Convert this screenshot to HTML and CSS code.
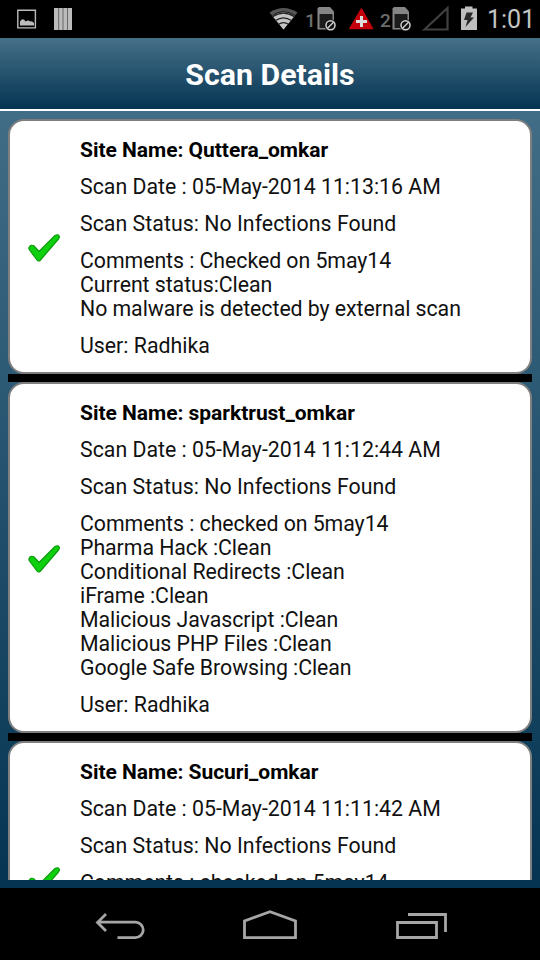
FILE: index.html
```html
<!DOCTYPE html>
<html lang="en">
<head>
	<meta charset="UTF-8">
	<title>Scan Details</title>
	<link rel="stylesheet" href="styles.css">
</head>
<body>
	<div class="status">
		<svg class="notices" width="90" height="38" viewBox="0 0 90 38">
			<path d="M17.800 10.300h17.600v17.600h-17.600z" fill="none" stroke="#bcbcbc" stroke-width="1.400"/>
			<path d="M20 25.500v-4q3-4.500 5.500 0 3-2 4.500 0 2-1 4 1.500v2.500z" fill="#bcbcbc"/>
			<path d="M54 8h18v22h-18z" fill="#bcbcbc"/>
			<path d="M58.700 8v22M63 8v22M67.500 8v22" stroke="#666" stroke-width="1"/>
		</svg>
		<svg class="wifi" width="30" height="38" viewBox="270 0 30 38">
			<path d="M270.500 12.500Q284.500 3.500 298.500 12.500L284.500 29.500z" fill="#555"/>
			<path d="M273.500 16Q284.500 8.500 295.500 16L284.500 29.500z" fill="#c4c4c4"/>
			<path d="M273.500 16.800Q284.500 9.500 295.500 16.800M276.500 20.600Q284.500 15.300 292.500 20.600M279.500 24.300Q284.500 21 289.500 24.300" fill="none" stroke="#222" stroke-width="1.2"/>
			<path d="M273.500 15.300Q284.500 8 295.500 15.300" fill="none" stroke="#000" stroke-width=".7"/>
		</svg>
		<span class="slot">1</span>
		<svg class="sim" width="20" height="38" viewBox="0 0 20 38">
			<path d="M.5 8.500L2 7h11l4 4.500V29.500H.5z" fill="#868686"/>
			<path d="M2.500 14h13v14h-13z" fill="#1c1c1c"/>
			<circle cx="13.500" cy="25.300" r="6" fill="#111"/>
			<circle cx="13.500" cy="25.300" r="4.500" fill="none" stroke="#d0d0d0" stroke-width="1.500"/>
			<path d="M10.500 28.300l6-6" stroke="#d0d0d0" stroke-width="1.500"/>
		</svg>
		<svg class="alert" width="26" height="38" viewBox="348 0 26 38">
			<path d="M361.500 9L372.500 28.500H350z" fill="#c4000c" stroke="#c4000c" stroke-width="1.500" stroke-linejoin="round"/>
			<path d="M356 21.500h11M361.500 16v11" stroke="#ddd" stroke-width="3"/>
		</svg>
		<span class="slot">2</span>
		<svg class="sim" width="20" height="38" viewBox="0 0 20 38">
			<path d="M.5 8.500L2 7h11l4 4.500V29.500H.5z" fill="#868686"/>
			<path d="M2.500 14h13v14h-13z" fill="#1c1c1c"/>
			<circle cx="13.500" cy="25.300" r="6" fill="#111"/>
			<circle cx="13.500" cy="25.300" r="4.500" fill="none" stroke="#d0d0d0" stroke-width="1.500"/>
			<path d="M10.500 28.300l6-6" stroke="#d0d0d0" stroke-width="1.500"/>
		</svg>
		<svg class="signal" width="30" height="38" viewBox="420 0 30 38">
			<path d="M424.500 29.500L447.500 8v21.500z" fill="none" stroke="#404040" stroke-width="2.200"/>
		</svg>
		<svg class="battery" width="18" height="38" viewBox="460 0 18 38">
			<path d="M461 8.500h4v-2h7.500v2h4.500V30h-16z" fill="#c0c0c0"/>
			<path d="M466.500 12.500h6.500l-2.500 5h3.500l-8.500 9.500 2-7h-3.500z" fill="#2a2a2a"/>
		</svg>
		<span class="clock">1:01</span>
	</div>
	<div class="title">Scan Details</div>
	<div class="main">
		<div class="list">
			<div class="card">
				<svg class="tick" width="34" height="32" viewBox="0 0 34 32">
					<path d="M2 15.500q2-3.500 5-1.500l5 5.500L28 3.500q3.500-2 4.500 1.500l-1 2L13.500 28q-2 2-3.500 0L2.500 18q-1-1.500-.5-2.500z" fill="#0fd00f" stroke="#0b9c0b" stroke-width="1.200" stroke-linejoin="round"/>
				</svg>
				<div class="info">
					<h2>Site Name: Quttera_omkar</h2>
					<p>Scan Date : 05-May-2014 11:13:16 AM</p>
					<p class="result">Scan Status: No Infections Found</p>
					<p class="comments">Comments : Checked on 5may14<br>Current status:Clean<br>No malware is detected by external scan</p>
					<p>User: Radhika</p>
				</div>
			</div>
			<div class="card">
				<svg class="tick" width="34" height="32" viewBox="0 0 34 32">
					<path d="M2 15.500q2-3.500 5-1.500l5 5.500L28 3.500q3.500-2 4.500 1.500l-1 2L13.500 28q-2 2-3.500 0L2.500 18q-1-1.500-.5-2.500z" fill="#0fd00f" stroke="#0b9c0b" stroke-width="1.200" stroke-linejoin="round"/>
				</svg>
				<div class="info">
					<h2>Site Name: sparktrust_omkar</h2>
					<p>Scan Date : 05-May-2014 11:12:44 AM</p>
					<p class="result">Scan Status: No Infections Found</p>
					<p class="comments">Comments : checked on 5may14<br>Pharma Hack :Clean<br>Conditional Redirects :Clean<br>iFrame :Clean<br>Malicious Javascript :Clean<br>Malicious PHP Files :Clean<br>Google Safe Browsing :Clean</p>
					<p>User: Radhika</p>
				</div>
			</div>
			<div class="card last">
				<svg class="tick" width="34" height="32" viewBox="0 0 34 32">
					<path d="M2 15.500q2-3.500 5-1.500l5 5.500L28 3.500q3.500-2 4.500 1.500l-1 2L13.500 28q-2 2-3.500 0L2.500 18q-1-1.500-.5-2.500z" fill="#0fd00f" stroke="#0b9c0b" stroke-width="1.200" stroke-linejoin="round"/>
				</svg>
				<div class="info">
					<h2>Site Name: Sucuri_omkar</h2>
					<p>Scan Date : 05-May-2014 11:11:42 AM</p>
					<p class="result">Scan Status: No Infections Found</p>
					<p class="comments">Comments : checked on 5may14</p>
				</div>
			</div>
		</div>
	</div>
	<div class="nav">
		<svg width="56" height="32" viewBox="92 910 56 32">
			<path d="M106 914l-8.500 8.500 8.500 8.500M98 922.200h37.500a7.700 7.700 0 0 1 0 15.400H117.500" fill="none" stroke="#a6a6a6" stroke-width="2.800"/>
		</svg>
		<svg width="58" height="32" viewBox="242 910 58 32">
			<path d="M244.500 937.600V921L270 911.800l25.500 9.200v16.600z" fill="none" stroke="#a6a6a6" stroke-width="2.800"/>
		</svg>
		<svg width="56" height="32" viewBox="394 910 56 32">
			<path d="M397.500 922.500h39v15h-39zM408 914.500h37.500V932" fill="none" stroke="#a6a6a6" stroke-width="2.800"/>
		</svg>
	</div>
</body>
</html>
```

FILE: styles.css
```css
* {box-sizing: border-box;}
body {margin: 0;width: 540px;height: 960px;overflow: hidden;background: #000;font-family: Roboto, sans-serif;display: flex;flex-direction: column;}
svg {display: block;flex: none;}

.status {height: 38px;flex: none;display: flex;align-items: center;color: #c4c4c4;}
.wifi {margin-left: 179px;}
.slot {width: 11px;margin-left: 6px;font-size: 19px;font-weight: 500;line-height: 36px;padding-top: 4px;color: #6c6c6c;}
.sim {margin-left: 1px;}
.alert {margin-left: 11px;}
.alert + .slot {margin-left: 6px;}
.alert + .slot + .sim {margin-left: 1px;}
.signal {margin-left: 8px;}
.battery {margin-left: 10px;}
.clock {margin-left: 9px;font-size: 25px;line-height: 38px;padding-top: 2px;}

.title {height: 73px;flex: none;border-bottom: 2px solid #fff;background: linear-gradient(#467088, #043452);color: #fff;font-size: 30.3px;font-weight: bold;line-height: 73px;text-align: center;}

.main {height: 777px;flex: none;padding: 8px;background: linear-gradient(#426d87, #043452);}
.list {height: 761px;overflow: hidden;}
.card {display: flex;align-items: center;border: 2px solid #7f7f7f;border-radius: 16px;background: #fff;padding: 17px 0 14px 17px;position: relative;margin-bottom: 8px;}
/* divider between two cards */
.card:not(.last)::after {content: "";position: absolute;left: -2px;right: -2px;bottom: -10px;height: 8px;background: #000;}
.last {height: 279px;align-items: flex-start;}
.last .tick {margin-top: 105px;}
.tick {margin-right: 19px;}
.info {font-size: 21.3px;line-height: 24px;color: #111;white-space: nowrap;}
.info h2 {margin: 0;font-size: 21px;line-height: 24px;letter-spacing: -.03px;color: #000;}
.info p {margin: 13px 0 0;}
.info .result {letter-spacing: .04px;}
.info .comments {letter-spacing: -.05px;}

.nav {height: 72px;flex: none;display: flex;justify-content: space-between;align-items: center;padding: 4px 90px 0 92px;}
```
